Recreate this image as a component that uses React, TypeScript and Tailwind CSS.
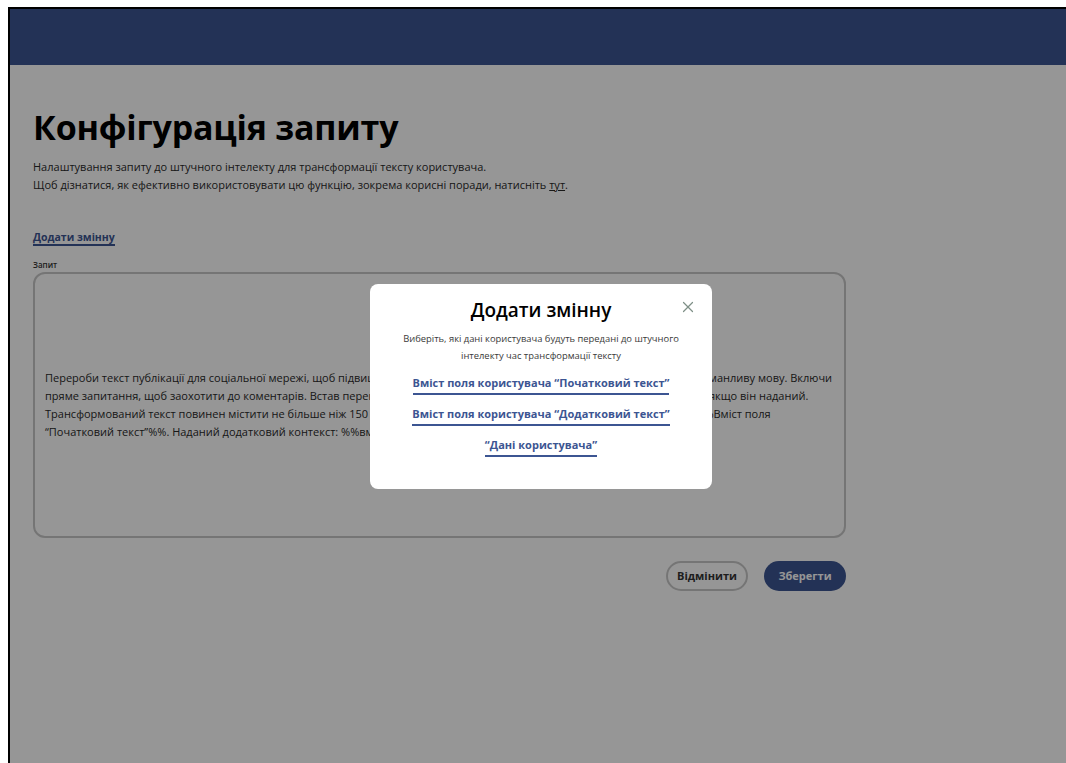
import { X } from "lucide-react";

const promptLines = [
  "Перероби текст публікації для соціальної мережі, щоб підвищити залученість аудиторії. Використовуй прості речення та заманливу мову. Включи",
  "пряме запитання, щоб заохотити до коментарів. Встав переконливий заклик до дії та уважно врахуй додатковий контекст, якщо він наданий.",
  "Трансформований текст повинен містити не більше ніж 150 слів і зберегти ключові думки оригіналу. Текст для обробки: %%Вміст поля",
  "“Початковий текст”%%. Наданий додатковий контекст: %%вміст поля “Додатковий текст”%%.",
];

const variables = [
  "Вміст поля користувача “Початковий текст”",
  "Вміст поля користувача “Додатковий текст”",
  "“Дані користувача”",
];

function AddVariableModal() {
  return (
    <div className="relative flex h-[205px] w-[342px] flex-col items-center rounded-[8px] bg-white pt-[14px]">
      <button type="button" className="absolute right-[15px] top-[14px] text-[#7f9088]" aria-label="Закрити">
        <X size={18} strokeWidth={1.6} />
      </button>
      <h2 className="text-[19px] font-semibold leading-[24px] text-black">Додати змінну</h2>
      <p className="mt-[8px] w-[300px] text-center text-[9.4px] leading-[17px] text-[#3a3a3a]">
        Виберіть, які дані користувача будуть передані до штучного інтелекту час трансформації тексту
      </p>
      <div className="mt-[11px] flex flex-col items-center gap-[11px]">
        {variables.map((v) => (
          <a
            key={v}
            href="#"
            className="border-b-2 border-[#3c5592] pb-[2px] text-[11px] font-bold leading-[16px] text-[#3c5592]"
          >
            {v}
          </a>
        ))}
      </div>
    </div>
  );
}

export default function App() {
  return (
    <div className="min-h-screen bg-white pl-[8px] pt-[7px] font-['Open_Sans',sans-serif]">
      <div className="relative h-[756px] overflow-hidden border-l-2 border-t-2 border-black bg-white">
        <header className="h-[56px] bg-[#3c5592]" />

        <main className="pl-[23px] pt-[40px]">
          <h1 className="text-[34px] font-bold leading-[44px] tracking-[-0.2px] text-black">Конфігурація запиту</h1>
          <p className="mt-[9px] text-[11px] leading-[18px] text-[#2a2a2a]">
            Налаштування запиту до штучного інтелекту для трансформації тексту користувача.
            <br />
            Щоб дізнатися, як ефективно використовувати цю функцію, зокрема корисні поради, натисніть{" "}
            <a href="#" className="underline">
              тут
            </a>
            .
          </p>

          <a
            href="#"
            className="mt-[36px] inline-block border-b-2 border-[#3c5592] text-[10.5px] font-bold leading-[14px] text-[#3c5592]"
          >
            Додати змінну
          </a>

          <div className="w-[813px]">
            <label className="mt-[12px] block text-[8px] font-semibold leading-[12px] text-[#333]">Запит</label>
            <div className="mt-[1px] flex h-[266px] items-center rounded-[12px] border-2 border-[#c8c8c8] px-[10px]">
              <div className="text-[11px] leading-[18px] text-[#2a2a2a]">
                {promptLines.map((line) => (
                  <div key={line} className="whitespace-nowrap">
                    {line}
                  </div>
                ))}
              </div>
            </div>

            <div className="mt-[23px] flex justify-end gap-[16px]">
              <button
                type="button"
                className="h-[30px] w-[82px] rounded-full border-2 border-[#c8c8c8] text-[11px] font-bold text-[#333]"
              >
                Відмінити
              </button>
              <button
                type="button"
                className="h-[30px] w-[82px] rounded-full bg-[#3c5592] text-[11px] font-bold text-white"
              >
                Зберегти
              </button>
            </div>
          </div>
        </main>

        <div className="absolute inset-0 flex items-center justify-center bg-black/[0.41] pl-[6px]">
          <AddVariableModal />
        </div>
      </div>
    </div>
  );
}
